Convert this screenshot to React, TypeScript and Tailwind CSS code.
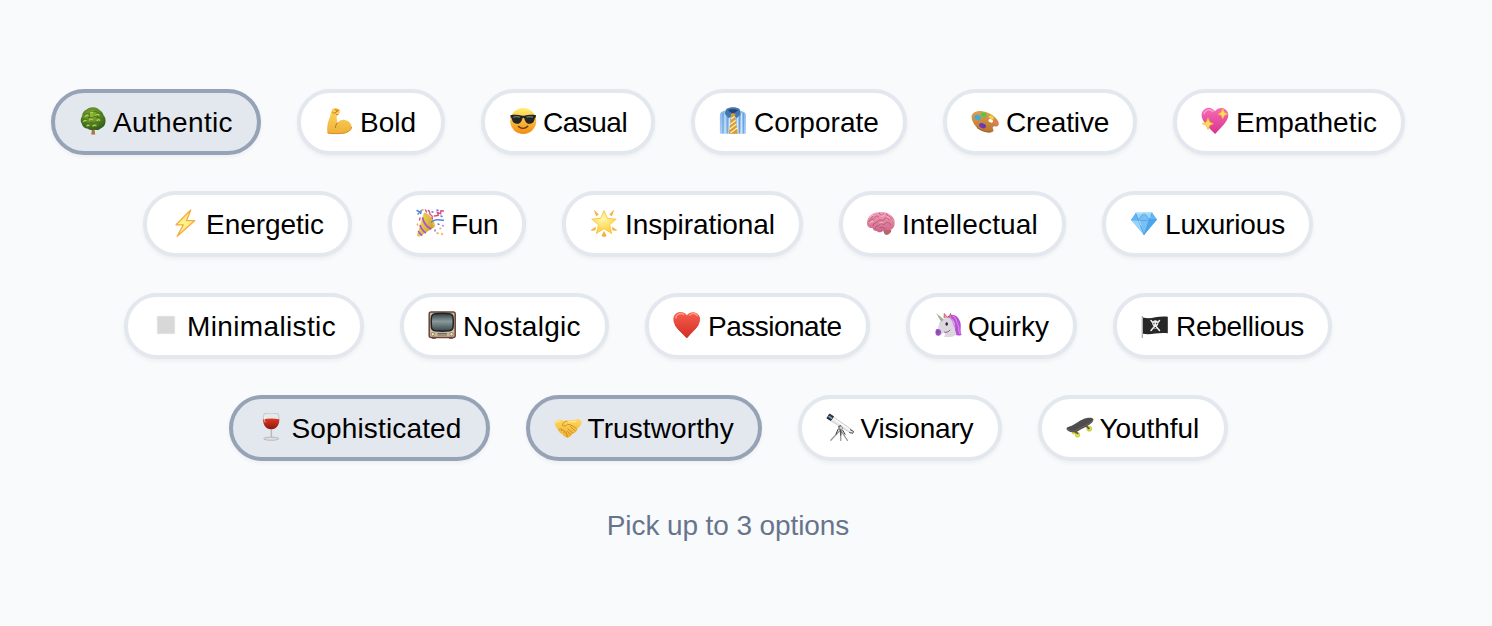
import React, { useState } from "react";
import clsx from "clsx";

type IconProps = { children: React.ReactNode };

function Icon({ children }: IconProps) {
  return (
    <svg viewBox="0 0 28 28" className="-mt-0.5 mr-1.5 size-7 shrink-0" fill="none" aria-hidden="true">
      {children}
    </svg>
  );
}

type StopsProps = { id: string; from: string; to: string; radial?: boolean };

function Gradient({ id, from, to, radial }: StopsProps) {
  const stops = (
    <>
      <stop stopColor={from} />
      <stop offset="1" stopColor={to} />
    </>
  );
  return (
    <defs>
      {radial ? (
        <radialGradient id={id} cx=".45" cy=".35" r=".65">{stops}</radialGradient>
      ) : (
        <linearGradient id={id} x1="0" y1="0" x2="0" y2="1">{stops}</linearGradient>
      )}
    </defs>
  );
}

const Tree = () => (
  <Icon>
    <Gradient id="tree" from="#93b935" to="#2f5c1b" radial />
    <path d="M12.2 20h4l-.5 4 .5 3.600h-4l.6-3.600Z" fill="#a8763f" />
    <path d="M14 .3c3 0 4.700 1.200 6.400 2.600 2.200 1 3.700 3.200 4.200 5.300 1.600 2 2.400 4.500 1.800 7-.2 2.800-2 5.200-4.400 6-2.200 2-4.700 2.300-6.700 1.200-2.400 1-4.700.8-6.400-.6-3-.3-5.700-2.300-6.200-5.300-1.700-2.500-1-5.400.4-7.600C3.300 6 5 3.400 7.600 2.500 9.300 1 11.500.3 14 .3Z" fill="url(#tree)" />
    <path d="M5 8.500q2-3 5-1.500 1-3.500 4.500-2 2.500-2 4.500 1 3-.5 4 2.500M3 14q2-3.500 5-1.500 1.500-3.500 5-1.500 2-3 5-.5 3-2 6 2M5 18q2-3.500 5-1 2-3 5-.5 2-3 5-.5 2-1.500 4 .5M10 7q1 2-.5 4m8.500-5q-1 3 1 5" stroke="#3b6c1d" strokeWidth=".8" />
    <path d="M6 9.500q1.500-2 3-1.200M11.500 6q1-1.400 2.400-.5M17 8q2-1.500 3 0M4.500 14.500q1.200-1.800 2.500-1M10.500 13q1.200-1.700 2.800-.5M18 13.500q1.400-1.400 2.600-.3M8 19q1-1.500 2-.5M14 19q1.500-1.600 3-.3" stroke="#b3d950" strokeWidth="1.200" strokeLinecap="round" />
  </Icon>
);

const Biceps = () => (
  <Icon>
    <Gradient id="arm" from="#ffd760" to="#eeb03a" />
    <path d="M6.800 3.500C7.200 1.600 8.500.9 10.200 1c2.500 0 4.500 1 4.900 2.600.4 1.700-.8 3.500-2.200 4.100-1 .5-1.400 1.700-1.200 3.300l.7 5c2-2.500 4.700-3.600 7.600-3 4 .8 6.700 3.900 6.600 7-.1 4-4.800 6.500-11.300 6.700-4.700.2-9.200.2-12.800-.7-1-5.500.2-11 2.300-15.800.8-2.400 1-4.900 2-6.700Z" fill="url(#arm)" />
    <path d="M2.500 25.800c4 1 8.500.9 12.800.7 6.500-.2 11-2.800 11.300-6.500" stroke="#d98a1d" strokeWidth="1" />
    <path d="M12.400 16c-1.500 1.700-2 3-1.900 4.500M7.500 5.200c1.200 1.500 3.300 1.400 3.700 0M10 2.800l3 .4M11.500 4.500c.8.2 1.400-.2 1.600-.8M11.600 7.500c.5.300 1.100.4 1.400.2" stroke="#b96f18" strokeWidth="1" strokeLinecap="round" />
  </Icon>
);

const Sunglasses = () => (
  <Icon>
    <Gradient id="cool" from="#fff06f" to="#f28a13" />
    <circle cx="14.200" cy="14" r="13" fill="url(#cool)" />
    <path d="M1.300 8.200c4-.5 8-.6 11 .2 1.300.4 2.600.4 3.900 0 3-.8 7-.7 10.900-.2l-.4 2.200c-.7.300-.9 1-1.300 2.400-.8 3.300-2.500 4-5.100 3.900-3.300-.1-4.200-2.800-5-5.300-.3-1-1.500-1-1.900 0-.8 2.600-1.800 5.200-5 5.300-2.700.1-4.500-.7-5.300-3.900-.3-1.500-.6-2.100-1.400-2.400Z" fill="#232522" />
    <path d="M4.500 10.200q3-1 6-.1M18 10.100q3-.8 5.600 0" stroke="#737970" strokeWidth="1.200" strokeLinecap="round" />
    <path d="M9.500 19.500c2.700 2.400 6.500 2.300 9.200-.3" stroke="#6d350c" strokeWidth="1.500" strokeLinecap="round" />
  </Icon>
);

const Shirt = () => (
  <Icon>
    <Gradient id="shirt" from="#89b7e7" to="#a7cff5" />
    <path d="M6.500 3.200 2.300 5C1.200 6 .9 7.500.9 9v17.800h26V9c0-2-.6-3.400-2-4.100L20 3Z" fill="url(#shirt)" />
    <path d="M4 6v20.500M8.300 8v18.500M20.500 8v18.500M24.400 6v20.500" stroke="#5e96d3" strokeWidth=".8" />
    <path d="M6 6v20.500M10.500 9v17.500M18.500 9v17.500M22.500 6v20.500" stroke="#d8edff" strokeWidth=".8" />
    <path d="M7.300 2c3.600-2.200 10-2.200 13.300 0l1 5.200-4 4-3.600-4-4.200 4-4-4.500Z" fill="#4478b0" />
    <path d="M8.800 3.300 14 7l5.200-3.700c-2-1.500-8.400-1.500-10.400 0Z" fill="#1e4976" />
    <path d="m11.700 7 2.300-1 2.500 1-.6 3.500 2.500 12.800.3 3.500H9.900l.4-3.500 2-12.800Z" fill="#d99a30" />
    <path d="m12.200 12 3.400-2.600m-4.300 8 5.300-4.200m-6 9 6.800-5.200m-6 9 6.700-5" stroke="#fff0b5" strokeWidth="1.300" />
  </Icon>
);

const Palette = () => (
  <Icon>
    <Gradient id="palette" from="#dda154" to="#b9722c" />
    <path d="M.6 10.500C.2 6 5 3.600 10.200 4.100c6.500.7 13 4.300 16.200 9 2.500 3.700 1.400 6.600-2 6.300-2.300-.3-3.300 1-2.300 2.500 1.300 2-.3 3.600-3 3.500-4.800-.1-11-2.300-13.800-5.500C2.800 17.400 1 14 .6 10.500Zm17.200 4c1.300 1.300 3.300 1.500 4 .5s-.1-2.300-1.500-2.800c-2-.8-3.700.8-2.500 2.300Z" fill="url(#palette)" fillRule="evenodd" />
    <ellipse cx="12.700" cy="7.700" rx="3" ry="2.300" fill="#5ac544" transform="rotate(18 12.700 7.700)" />
    <ellipse cx="6.700" cy="10.500" rx="3.200" ry="2.500" fill="#3aaee0" transform="rotate(25 6.700 10.500)" />
    <ellipse cx="20.300" cy="10.400" rx="2.800" ry="1.800" fill="#efd23d" transform="rotate(28 20.300 10.400)" />
    <ellipse cx="24.900" cy="16.100" rx="2.500" ry="1.600" fill="#ed7760" transform="rotate(30 24.900 16.100)" />
    <ellipse cx="11.600" cy="18.800" rx="3.600" ry="2.400" fill="#6a3ab5" transform="rotate(20 11.600 18.800)" />
    <path d="M6 20.500c3.500 3 8.800 4.700 13 4.700" stroke="#8d501d" strokeWidth=".8" />
  </Icon>
);

const SparklingHeart = () => (
  <Icon>
    <Gradient id="pink" from="#f56cb3" to="#d9338e" />
    <path d="M14 4.200C17 .5 21.500.1 24.800 2.700c3.300 2.700 3 7 1 10.500-2.300 4.200-7 8.700-11.700 13.700C9.300 22.300 4.500 17.600 2.200 13.500-.2 9.300-.1 4.500 4 1.900 7.500-.2 11.500.9 14 4.200Z" fill="url(#pink)" />
    <path d="M3 6.500C4.500 2.500 9 1.500 12 4.500" stroke="#ffa0d0" strokeWidth="1.500" strokeLinecap="round" />
    <path d="m21.800 1.300 1.500 4 3.400 1.800-3.400 1.500-1.500 3.300-1.500-3.300L17 7.100l3.200-1.800ZM7 10.700l1.700 4.200 3.800 1.900-3.800 1.700L7 22.700l-1.700-4.200-4-1.700 4-1.900Z" fill="#ffdb58" stroke="#f6ac36" strokeWidth=".6" />
  </Icon>
);

const Bolt = () => (
  <Icon>
    <path d="M19.700 1 5.100 15.800l7.200.1-6.100 11.400L23.600 11.700l-8-.2Z" fill="#fff08b" stroke="#f5ac3c" strokeWidth="1.300" strokeLinejoin="round" />
  </Icon>
);

const Popper = () => (
  <Icon>
    <defs>
      <linearGradient id="cone" x1="0" y1="0" x2="1" y2=".5">
        <stop stopColor="#fce96b" />
        <stop offset="1" stopColor="#d39a2a" />
      </linearGradient>
    </defs>
    <path d="M7.500 4.500 1 26c0 1.300 1.200 1.800 2.700 1.400L18.500 18c-1.200-6-5-11-11-13.500Z" fill="url(#cone)" />
    <path d="M6.500 8.500c1 5 4 9.500 8.800 11.600M4 16c1.300 4 3.600 6.700 6 7.900M2.300 22c1 2.200 2.300 3.800 4 4.500" stroke="#a05ad0" strokeWidth="1.700" />
    <path d="M8 4.800c5 .8 9.600 6.700 10.300 12.800" stroke="#e4bd45" strokeWidth="2" />
    <path d="M1 1.500 3.800 3 2 5M5.200 1.500l-.5 3M15.500 12.800c3.800-2.700 7-2.200 12-1.500" stroke="#4a86e5" strokeWidth="1.500" strokeLinecap="round" />
    <path d="M12.200 1.500c3 1 0 3 2.700 4.500s.4 2.500 1.500 3.700M18.300 7l4-.5-1-3 3.300 1.200.3-3 2.500.3M9.500 1l1 2M4 9l-.5 2" stroke="#d65081" strokeWidth="1.400" strokeLinecap="round" />
    <path d="M16 3h1M21 1l1 .5M25 7l1 .5M22 15l1 .3M27 16.500v.5M19 21v1" stroke="#7b65dc" strokeWidth="1.400" strokeLinecap="round" />
    <path d="M24 19.500h.8M21 24l1 .5M26 24.500v1M6 1h1M1.500 15v1" stroke="#f1a152" strokeWidth="1.500" strokeLinecap="round" />
  </Icon>
);

const Star = () => (
  <Icon>
    <Gradient id="star" from="#fff7ad" to="#ffcf32" radial />
    <path d="m14 1.500 3.500 7.800 8.800.8-6.600 5.700 2 8.700-7.700-4.800-7.700 4.800 2.200-8.700-6.800-5.700 8.800-.8Z" fill="url(#star)" stroke="#f7bb36" strokeWidth=".7" strokeLinejoin="round" />
    <path d="m4.500 1.500 3.800 4-2 1.200Zm19 0-3.700 4 2 1.200ZM1.200 21.300l4.300-3-.5 2.800Zm25.500 0-4.300-3 .5 2.800ZM12 26.800l2-4.300 2.200 4.300c-.8 1-3.400 1-4.200 0Z" fill="#f5b331" stroke="#f1a42d" strokeWidth=".6" strokeLinejoin="round" />
  </Icon>
);

const Brain = () => (
  <Icon>
    <Gradient id="brain" from="#f2a0b6" to="#cc6487" />
    <path d="M16 21c2.500-.3 6.300-.8 8.500.2-.5 2.300-2.700 4.500-5 4.800-2 0-2.700-2.500-3.500-5Z" fill="#b76368" />
    <path d="M4 6c2.400-2 5.600-3.100 8.400-2.600 4-.9 8-.1 10.200 2.200 3.200 1.600 5.400 4.800 5 8.200.4 3-1.400 6.200-4 7-2.400 1-5 .2-7.300.7-2 2.300-5 2.400-6.600.6-2 .2-3.500-1-4-2.800-2.500 0-4.800-1-5.400-3-.9-3.500.5-8.200 3.700-10.300Z" fill="url(#brain)" />
    <path d="M1.800 12.500c2-3.300 4.500-1.500 6-4 1.300-1.800 2.600-2 3.800-.6M6 16.500c0-3 4-2 5-4.500 1.600-2.500 5 .8 6-1.500 1.500-2.700 4.600-1.700 5 .5M12.500 3.800c-1 1.800 2.500 3.800 4 1.500m3-.5c.5 2.500 3.700 2.500 4.700 4.700M8.500 20c-1-3 3-2.500 4-4.500 2-2.400 4 1.400 6-1 1.500-2 4.500-1 5 1.500M13 18.500q3-1 5 1.200M4 9l1.500-1.500" stroke="#b55274" strokeWidth=".9" strokeLinecap="round" />
    <path d="M3 8.500q1-2 3-2.500M14 7q2 .8 3-.6M20 8q2-.5 3 1.200M3 14q1-2 3-1.500M13 14q1.500-1.300 3-.2" stroke="#ffc4ce" strokeWidth=".9" strokeLinecap="round" />
  </Icon>
);

const Gem = () => (
  <Icon>
    <path d="M5.800 3.800 22 3.500l5 6.900-13 15.500L1 10.700Z" fill="#62b4f4" />
    <path d="m5.800 3.800 2.400 7L14 4ZM22 3.500 14 4l5.500 6.500ZM1 10.700l7.200.1L14 25.900Z" fill="#94d5ff" />
    <path d="M8.200 10.800 14 4l5.500 6.500L14 25.900Z" fill="#78bff3" />
    <path d="m19.500 10.500 7.500-.1-13 15.500Z" fill="#4ba7ec" />
    <path d="M1 10.700c5 1 20 1 26-.3M5.800 3.800l2.400 7 5.800 15 5.500-15.300L22 3.500M8.200 10.800 14 4l5.500 6.500" stroke="#4a94d6" strokeWidth=".6" />
    <path d="M6 4.300 21.500 4M9 11.500l2 5M19 6l1.500 2.500" stroke="#b9e2fb" strokeWidth=".9" />
  </Icon>
);

const Square = () => (
  <Icon>
    <rect x="5.300" y="5.300" width="17.400" height="17.400" rx=".5" fill="#d8d8d8" stroke="#e2e2e2" strokeWidth=".8" />
  </Icon>
);

const Television = () => (
  <Icon>
    <defs>
      <linearGradient id="screen" x1="0" y1="0" x2="0" y2="1">
        <stop stopColor="#303b3f" />
        <stop offset=".45" stopColor="#8c999c" />
        <stop offset="1" stopColor="#38464b" />
      </linearGradient>
    </defs>
    <path d="M3.500 25h5l-.6 2.700H4Zm17 0h5l-.6 2.700H21Z" fill="#583d34" />
    <rect x="1.200" y=".9" width="26" height="25.500" rx="2" fill="#c7b99f" stroke="#6d4438" strokeWidth="1.500" />
    <path d="M3 2.500h22.500v18.500H3Z" fill="#cfc4ae" />
    <path d="M7 2.800c4.500-.7 10-.7 14.500 0 2.400.3 3.400 1.700 3.600 4 .3 3.200.3 6.200 0 9.200-.2 2.200-1.200 3.400-3.600 3.700-4.500.6-10 .6-14.500 0-2.400-.3-3.400-1.500-3.600-3.700-.3-3-.3-6 0-9.200.2-2.300 1.200-3.700 3.600-4Z" fill="url(#screen)" stroke="#1d2424" strokeWidth="1.500" />
    <path d="M9.500 22.500h9.400M9.500 24h9.400" stroke="#655245" strokeWidth=".8" />
    <circle cx="4.800" cy="23.200" r="1.700" fill="#f3e4bb" stroke="#826242" strokeWidth=".7" />
    <circle cx="23.500" cy="23.200" r="1.700" fill="#f3e4bb" stroke="#826242" strokeWidth=".7" />
  </Icon>
);

const Heart = () => (
  <Icon>
    <Gradient id="red" from="#f65f4e" to="#d42d23" />
    <path d="M13.800 4.300C16.700.5 21.400.2 24.700 3c3.200 2.800 2.800 7.100.8 10.500-2.400 4.200-7.400 8.300-11.700 13.500C9.300 22.300 4.400 18 2 13.800-.4 9.700-.3 4.700 3.400 2.200 7 0 11.500 1 13.800 4.300Z" fill="url(#red)" />
    <path d="M2.800 7C3 3.400 7.300 1.300 10.600 3.500M16.700 4c2.800-2 5.700-1.600 7.500.5" stroke="#ff9b88" strokeWidth="1.500" strokeLinecap="round" />
    <path d="M2 13.800C4.400 18 9.300 22.300 13.800 27c4.300-5.200 9.300-9.300 11.700-13.500" stroke="#bc251d" strokeWidth=".7" />
  </Icon>
);

const Unicorn = () => (
  <Icon>
    <path d="M13 6c5-5 11.500-1.300 13 4.500 2 5-.6 8 1.600 13.500-5 1.500-7.200-.5-7.700-3.500L15 13Z" fill="#b352d3" />
    <path d="M11 7c3-1.300 7.300-.1 9 3.500 1.700 3.300-.2 7 2.500 12.500-2.700 3.600-8 3.200-12.500 2.700 1.500-2 1.500-3.500.5-4.500-2 .4-3.500 3.800-6 3.700C2 24.800.9 21.500 3 19c1.700-2 1.500-6.500 3.500-9.300Z" fill="#dcd6de" />
    <path d="M2.400 18.200c2.800-.9 5 .9 4.800 3.500-.8 1.900-2.100 3.600-4 2.900-2-.9-2.200-4.300-.8-6.400Z" fill="#9a4fc0" />
    <path d="M2 2 9.700 8.500 7.500 10.700Z" fill="#65c997" />
    <path d="m4.200 6.200 2.100-.5m-.6 3 2.600-1" stroke="#ec8894" strokeWidth="1.300" />
    <path d="m10 7 .3-4.500 3 4m2-.2 1.200-4 1.400 5" fill="#ef8ba4" stroke="#c45668" strokeWidth=".8" />
    <path d="M19 5c4 2 3 6 5 9s-.5 6 2 8.500M16.500 7.500c4 2.500 2 6 4.500 9" stroke="#d983ea" strokeWidth="1.200" strokeLinecap="round" />
    <ellipse cx="12.700" cy="13" rx="1.300" ry="1.700" fill="#302536" />
    <path d="M3.500 21h.5M10.500 21.200c2 .4 4-.2 5.500-2" stroke="#66436d" strokeWidth=".8" strokeLinecap="round" />
  </Icon>
);

const PirateFlag = () => (
  <Icon>
    <path d="M1.300 5v22" stroke="#a6a6a6" strokeWidth="1.200" />
    <path d="M2 6.500c8 2.500 14-2 24.800-.7v16.500c-10-1.300-16 2-24.800.5Z" fill="#272727" />
    <path d="m10 9.500 8.500 10m0-10-8.500 10" stroke="#eee" strokeWidth="1.500" strokeLinecap="round" />
    <path d="M11.300 12.300c0-4.200 6-4.200 6 0 0 1.600-.7 2.500-1.500 2.700v2.500h-3V15c-.8-.2-1.500-1.100-1.500-2.700Z" fill="#eee" />
    <path d="M12.500 12.500h1m1.700 0h1M14.300 16v1" stroke="#222" strokeWidth="1.300" />
  </Icon>
);

const Wine = () => (
  <Icon>
    <Gradient id="wine" from="#dc3a26" to="#8f160e" />
    <path d="M7.200.8c4-.8 10-.8 14 0 2 6.700 1 14-7 15.500-8-1.500-9-8.800-7-15.500Z" fill="#e9e8e9" stroke="#b9babb" strokeWidth=".7" />
    <path d="M6.200 6.300c5-1 11-1 16 0 .3 5.500-2.500 9.800-8 10-5.500-.2-8.300-4.500-8-10Z" fill="url(#wine)" />
    <path d="M14.200 16v9" stroke="#aaa" strokeWidth="1.700" />
    <path d="M13.800 17v8" stroke="#f2f2f2" strokeWidth=".7" />
    <ellipse cx="14.200" cy="25.700" rx="7.500" ry="1.600" fill="#dedede" stroke="#a8a8aa" strokeWidth=".7" />
    <path d="M8 2.500c-.8 2.500-.6 5 .2 7" stroke="#fff" strokeWidth="1" opacity=".6" />
  </Icon>
);

const Handshake = () => (
  <Icon>
    <Gradient id="hands" from="#ffd85c" to="#efb033" />
    <path d="M.7 9.500C2.500 8 4.500 6.700 6.500 6.500c2.200.9 4.500 2 6.800 1.200 2.600-1.300 5-.6 7.700-.7L24 6c1.400.7 3 1.800 3.700 2.700-.3 3-2 5.300-4.400 7-.2 3-3 4.600-5.100 5.400-1.500 2.300-3.400 4-5.200 3.400-2.500-.3-4-2.300-4.800-3.500-2.600-.6-3.400-2.500-3.600-4C2.400 15.500.8 12.300.7 9.500Z" fill="url(#hands)" />
    <path d="M13 8c-2.800.3-4.500 2.200-4.600 4.300 1.700 1.600 3.700.5 5-1 4 .3 7 2.200 9.500 5M4.500 17c1.600-2 4-1 3.200 1-.1-1.500 3.700-1.200 2.500 1.200 2-.8 3 .5 1.800 2 1.800 0 2 1.800 1.200 2.800M14 16l4.800 4m-2.500-6.500 5 4.400M13.500 18.300l3.300 3.500" stroke="#c4811f" strokeWidth=".8" strokeLinecap="round" />
    <path d="M2 9.800q2-1.500 4-2M15 9q4-.4 7-.4" stroke="#fff09b" strokeWidth="1" strokeLinecap="round" />
  </Icon>
);

const Telescope = () => (
  <Icon>
    <path d="m14.500 17-9.700 10.300m9.700-10 .3 10.200m0-10.200 6.700 10.200" stroke="#97999b" strokeWidth="1.300" strokeLinecap="round" />
    <path d="m12.500 15.500-2.700 5.800m5 1.200v-6.300m1.500.5 3 5" stroke="#34373a" strokeWidth="1" />
    <path d="M5.800 2.800 26 16.800l-1.800 2.900L3.500 7Z" fill="#e8e8e9" stroke="#b4b6b8" strokeWidth=".6" />
    <path d="M6 4.500 24.500 17.500" stroke="#fff" strokeWidth="1.300" />
    <path d="M3.500 1 7.500 3.500 4.800 7.500.9 5.200Z" fill="#273449" stroke="#15191c" strokeWidth=".8" />
    <path d="M2.500 3.200 6 5.500" stroke="#7ca8c8" strokeWidth="1.500" />
    <path d="m24 16.500 3.700 2-1 1.800-3.400-.8" fill="#e7e7e7" stroke="#353839" strokeWidth=".9" />
    <path d="m12 13.500 2.600-1.500 2.500 3.200-3.300 2.300Z" fill="#4b4e50" />
    <circle cx="14.800" cy="14.800" r="1.500" fill="#d2d3d3" />
  </Icon>
);

const Skateboard = () => (
  <Icon>
    <circle cx="11.500" cy="21.800" r="2.300" fill="#dbe844" stroke="#a9b32c" strokeWidth=".6" />
    <circle cx="7.600" cy="19.800" r="1.700" fill="#cddd3c" />
    <circle cx="23.300" cy="15.800" r="2.500" fill="#dbe844" stroke="#a9b32c" strokeWidth=".6" />
    <path d="m8 18 4.200 2.800m7.800-8 3.500 3.200" stroke="#71563f" strokeWidth="1.800" />
    <path d="M.6 15.100c.8-1.200 4-1.500 6.500-3 4.500-2.800 9.200-6.300 13-6.900 3-.6 6.500-.7 7.200 1.200.5 1.700-1.700 4-4.800 5.800-4 2.500-7 3.500-10.200 5.700-3.300 2.300-7.500 1.600-10.300-.1-1-.6-1.800-1.700-1.400-2.700Z" fill="#4d4d4e" />
    <path d="M1 16c2.500 2 7 3 10.300.8 3.500-2.500 7.400-3.700 11.200-6 2.700-1.600 4.500-3.300 4.700-4.700" stroke="#8a6a59" strokeWidth=".7" />
  </Icon>
);

type Trait = {
  name: string;
  icon: React.ReactNode;
  width: string;
  tracking: string;
};

const rows: Trait[][] = [
  [
    { name: "Authentic", icon: <Tree />, width: "w-[210px]", tracking: "tracking-[0.36px]" },
    { name: "Bold", icon: <Biceps />, width: "w-[148px]", tracking: "ml-px tracking-normal" },
    { name: "Casual", icon: <Sunglasses />, width: "w-[174px]", tracking: "tracking-[-0.5px]" },
    { name: "Corporate", icon: <Shirt />, width: "w-[216px]", tracking: "ml-px tracking-[0.05px]" },
    { name: "Creative", icon: <Palette />, width: "w-[194px]", tracking: "ml-px tracking-[-0.12px]" },
    { name: "Empathetic", icon: <SparklingHeart />, width: "w-[232px]", tracking: "ml-px tracking-[0.1px]" },
  ],
  [
    { name: "Energetic", icon: <Bolt />, width: "w-[209px]", tracking: "ml-px tracking-[-0.05px]" },
    { name: "Fun", icon: <Popper />, width: "w-[138px]", tracking: "ml-px tracking-[-0.4px]" },
    { name: "Inspirational", icon: <Star />, width: "w-[241px]", tracking: "ml-px tracking-[-0.08px]" },
    { name: "Intellectual", icon: <Brain />, width: "w-[227px]", tracking: "ml-px tracking-[0.18px]" },
    { name: "Luxurious", icon: <Gem />, width: "w-[211px]", tracking: "ml-px tracking-[-0.15px]" },
  ],
  [
    { name: "Minimalistic", icon: <Square />, width: "w-[240px]", tracking: "ml-px tracking-[0.36px]" },
    { name: "Nostalgic", icon: <Television />, width: "w-[209px]", tracking: "ml-px tracking-[0.3px]" },
    { name: "Passionate", icon: <Heart />, width: "w-[225px]", tracking: "ml-px tracking-[-0.5px]" },
    { name: "Quirky", icon: <Unicorn />, width: "w-[171px]", tracking: "tracking-normal" },
    { name: "Rebellious", icon: <PirateFlag />, width: "w-[219px]", tracking: "ml-px tracking-[-0.27px]" },
  ],
  [
    { name: "Sophisticated", icon: <Wine />, width: "w-[261px]", tracking: "ml-px tracking-[0.15px]" },
    { name: "Trustworthy", icon: <Handshake />, width: "w-[236px]", tracking: "tracking-[0.1px]" },
    { name: "Visionary", icon: <Telescope />, width: "w-[204px]", tracking: "ml-px tracking-[-0.2px]" },
    { name: "Youthful", icon: <Skateboard />, width: "w-[190px]", tracking: "tracking-[-0.05px]" },
  ],
];

const MAX = 3;

export default function App() {
  const [selected, setSelected] = useState(["Authentic", "Sophisticated", "Trustworthy"]);

  const toggle = (name: string) => {
    if (selected.includes(name)) {
      setSelected(selected.filter((s) => s !== name));
    } else if (selected.length < MAX) {
      setSelected([...selected, name]);
    }
  };

  return (
    <main className="h-screen w-full overflow-hidden bg-[#f9fafc] pt-[89px] font-['Liberation_Sans',Arial,sans-serif] text-[28px] leading-8">
      <div className="flex w-[1456px] flex-col items-center gap-9">
        {rows.map((row, i) => (
          <div key={i} className="flex justify-center gap-9">
            {row.map(({ name, icon, width, tracking }) => (
              <button
                key={name}
                type="button"
                aria-pressed={selected.includes(name)}
                onClick={() => toggle(name)}
                className={clsx(
                  "flex h-[66px] shrink-0 items-center whitespace-nowrap rounded-full border-4 pl-6 text-black shadow-[0_2px_4px_rgba(0,0,0,0.05)]",
                  width,
                  selected.includes(name) ? "border-[#96a3b7] bg-[#e3e7ee]" : "border-[#e3e7ee] bg-white"
                )}
              >
                {icon}
                <span className={clsx("pt-0.5", tracking)}>{name}</span>
              </button>
            ))}
          </div>
        ))}
        <p className="mt-[13px] tracking-[-0.1px] text-[#67758c]">Pick up to {MAX} options</p>
      </div>
    </main>
  );
}
